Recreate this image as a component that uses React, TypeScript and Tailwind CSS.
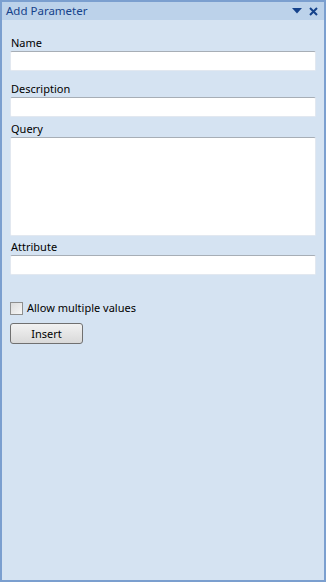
import React from "react";

const fieldClass =
  "block w-full rounded-[2px] border border-[#e2e8f0] border-t-[#a7aeb6] bg-white outline-none";

function Field({ label, labelGap, top, height = 20 }: { label: string; labelGap: number; top: number; height?: number }) {
  return (
    <div style={{ marginTop: top }}>
      <div className="h-[14px] pl-[1px] text-[11px] leading-[14px] text-black" style={{ marginBottom: labelGap }}>
        {label}
      </div>
      <div className={fieldClass} style={{ height }} />
    </div>
  );
}

export default function App() {
  return (
    <div
      className="flex h-[582px] w-[326px] flex-col border-2 border-[#7b9fcf] bg-[#d5e3f2]"
      style={{ fontFamily: '"Noto Sans", "DejaVu Sans", sans-serif' }}
    >
      <div className="flex h-[18px] items-center justify-between bg-[#bcd2ea] pl-[4px] pr-[6px]">
        <span className="text-[11.5px] leading-none text-[#15428b]">Add Parameter</span>
        <div className="flex items-center gap-[7px]">
          <svg width="10" height="6" viewBox="0 0 10 6">
            <path d="M0 0 H10 L5 5.5 Z" fill="#15428b" />
          </svg>
          <svg width="9" height="9" viewBox="0 0 9 9">
            <path d="M1 1 L8 8 M8 1 L1 8" stroke="#15428b" strokeWidth="2" />
          </svg>
        </div>
      </div>
      <div className="flex flex-col px-[8px]">
        <Field label="Name" top={16} labelGap={1} />
        <Field label="Description" top={11} labelGap={1} />
        <Field label="Query" top={5} labelGap={1} height={99} />
        <Field label="Attribute" top={4} labelGap={1} />
        <label className="mt-[26px] flex items-center gap-[4px] text-[11px] leading-[14px] text-black">
          <span className="block h-[13px] w-[13px] border border-[#8e8f8f] bg-gradient-to-br from-[#dcdcdc] to-[#f7f7f7]" />
          Allow multiple values
        </label>
        <button
          type="button"
          className="mt-[8px] h-[21px] w-[73px] rounded-[3px] border border-[#707070] bg-gradient-to-b from-[#f2f2f2] to-[#d9d9d9] text-[11px] leading-none text-black"
        >
          Insert
        </button>
      </div>
    </div>
  );
}
